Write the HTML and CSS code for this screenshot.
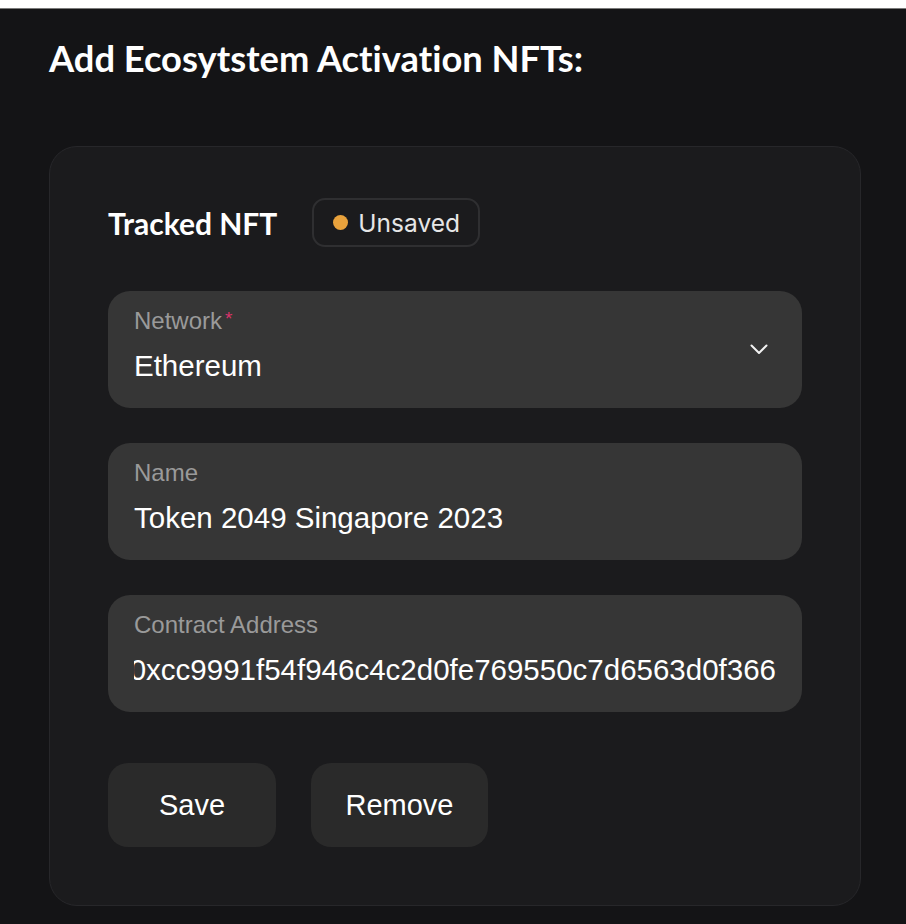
FILE: index.html
```html
<!DOCTYPE html>
<html lang="en">
<head>
<meta charset="utf-8">
<title>Add Ecosystem Activation NFTs</title>
<link rel="stylesheet" href="styles.css">
</head>
<body>
<div class="topstrip"></div>
<main class="page">
  <h1 class="title">Add Ecosytstem Activation NFTs:</h1>
  <section class="card">
    <div class="card-head">
      <h2 class="card-title">Tracked NFT</h2>
      <span class="badge"><span class="dot"></span>Unsaved</span>
    </div>
    <div class="fields">
      <div class="field field-select">
        <div class="field-body">
          <div class="label">Network<span class="req">*</span></div>
          <div class="value">Ethereum</div>
        </div>
        <svg class="chevron" width="18" height="11" viewBox="0 0 18 11"><path d="M1.5 1.5 L9 9 L16.5 1.5" fill="none" stroke="#f2f2f2" stroke-width="2" stroke-linecap="round" stroke-linejoin="round"/></svg>
      </div>
      <div class="field">
        <div class="field-body">
          <div class="label">Name</div>
          <div class="value">Token 2049 Singapore 2023</div>
        </div>
      </div>
      <div class="field">
        <div class="field-body">
          <div class="label">Contract Address</div>
          <div class="value value-scroll"><span>0xcc9991f54f946c4c2d0fe769550c7d6563d0f366</span></div>
        </div>
      </div>
    </div>
    <div class="actions">
      <button class="btn btn-save">Save</button>
      <button class="btn btn-remove">Remove</button>
    </div>
  </section>
</main>
</body>
</html>
```
FILE: styles.css
```css
html, body {
  margin: 0;
  padding: 0;
  background: #141416;
}
body {
  width: 906px;
  height: 924px;
  overflow: hidden;
}
.topstrip {
  height: 8px;
  background: #ffffff;
  border-bottom: 1px solid #7a7a7a;
}
.page {
  padding: 0 45px 0 49px;
}
.title {
  margin: 0;
  padding-top: 27px;
  font-family: Lato, "Liberation Sans", sans-serif;
  font-weight: 700;
  font-size: 36.3px;
  line-height: 44px;
  color: #ffffff;
  font-variant-ligatures: none;
}
.card {
  margin-top: 66px;
  width: 812px;
  height: 760px;
  box-sizing: border-box;
  background: #1b1b1d;
  border: 1px solid #27272a;
  border-radius: 28px;
  padding: 51px 58px 0 58px;
}
.card-head {
  display: flex;
  align-items: center;
  gap: 35px;
  height: 49px;
}
.card-title {
  margin: 0;
  font-family: Lato, "Liberation Sans", sans-serif;
  font-weight: 700;
  font-size: 30px;
  color: #ffffff;
}
.badge {
  display: inline-flex;
  align-items: center;
  gap: 10px;
  height: 49px;
  box-sizing: border-box;
  padding: 0 18px 0 19px;
  border: 2px solid #2f2f31;
  border-radius: 13px;
  font-family: Inter, "Noto Sans", sans-serif;
  font-size: 24.5px;
  color: #e6e6e6;
}
.dot {
  width: 15px;
  height: 15px;
  border-radius: 50%;
  background: #e9a23c;
}
.fields {
  margin-top: 44px;
  display: flex;
  flex-direction: column;
  gap: 35px;
}
.field {
  height: 117px;
  box-sizing: border-box;
  background: #363636;
  border-radius: 22px;
  padding: 16px 26px 0 26px;
  display: flex;
  align-items: flex-start;
}
.field-body {
  flex: 1;
  min-width: 0;
}
.label {
  font-family: "Liberation Sans", Arial, sans-serif;
  font-size: 24px;
  line-height: 28px;
  color: #9a9a9a;
}
.req {
  color: #d8336a;
  font-size: 19px;
  vertical-align: top;
  margin-left: 3px;
  position: relative;
  top: -2px;
}
.value {
  margin-top: 14px;
  font-family: "Liberation Sans", Arial, sans-serif;
  font-size: 29.5px;
  line-height: 34px;
  color: #ffffff;
  white-space: nowrap;
}
.value-scroll {
  overflow: hidden;
  display: flex;
  justify-content: flex-end;
}
.chevron {
  flex: none;
  margin-right: 8px;
  margin-top: 37px;
}
.actions {
  margin-top: 51px;
  display: flex;
  gap: 35px;
}
.btn {
  height: 84px;
  border: none;
  border-radius: 20px;
  background: #2a2a2a;
  color: #ffffff;
  font-family: "Liberation Sans", Arial, sans-serif;
  font-size: 29px;
  cursor: pointer;
}
.btn-save {
  width: 168px;
}
.btn-remove {
  width: 177px;
}
```
